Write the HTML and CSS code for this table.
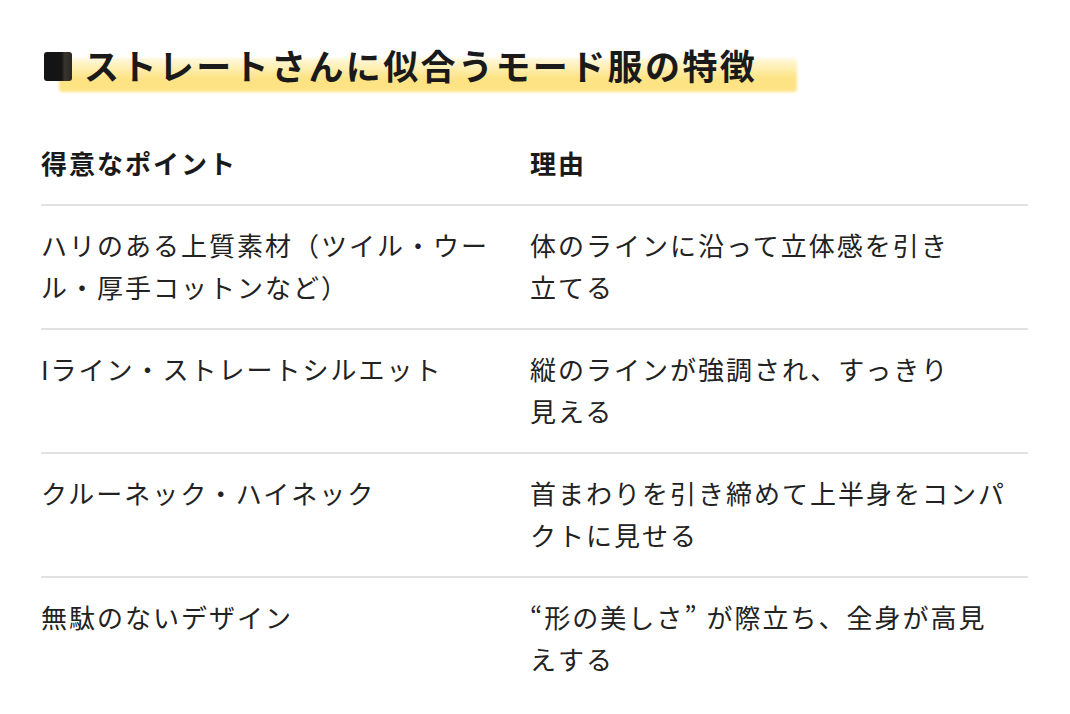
FILE: index.html
```html
<!DOCTYPE html>
<html lang="ja">
<head>
<meta charset="utf-8">
<link rel="stylesheet" href="styles.css">
</head>
<body>
<div class="page">
  <h2 class="title"><span class="mark"></span><span class="title-text">ストレートさんに似合うモード服の特徴</span></h2>
  <div class="table">
    <div class="row head">
      <div class="cell">得意なポイント</div>
      <div class="cell">理由</div>
    </div>
    <div class="row">
      <div class="cell">ハリのある上質素材（ツイル・ウー<br>ル・厚手コットンなど）</div>
      <div class="cell">体のラインに沿って立体感を引き<br>立てる</div>
    </div>
    <div class="row">
      <div class="cell">Iライン・ストレートシルエット</div>
      <div class="cell">縦のラインが強調され、すっきり<br>見える</div>
    </div>
    <div class="row">
      <div class="cell">クルーネック・ハイネック</div>
      <div class="cell">首まわりを引き締めて上半身をコンパ<br>クトに見せる</div>
    </div>
    <div class="row last">
      <div class="cell">無駄のないデザイン</div>
      <div class="cell">“形の美しさ” が際立ち、全身が高見<br>えする</div>
    </div>
  </div>
</div>
</body>
</html>
```
FILE: styles.css
```css
html, body {
  margin: 0;
  padding: 0;
  background: #ffffff;
}
body {
  font-family: "Noto Sans CJK JP", "Noto Sans", sans-serif;
  color: #222222;
}
.page {
  width: 987px;
  padding: 40px 0 0 41px;
}
.title {
  margin: 0;
  display: flex;
  align-items: center;
  font-size: 35px;
  line-height: 49px;
  font-weight: 700;
  letter-spacing: 2.4px;
  color: #1a1a1a;
}
.mark {
  width: 28px;
  height: 29px;
  margin-left: 3px;
  margin-top: 4px;
  border-radius: 3px;
  background: linear-gradient(to right, #141414 0%, #141414 62%, #3a3530 74%, #2a2622 100%);
  flex: none;
  position: relative;
  z-index: 2;
}
.title-text {
  position: relative;
  margin-left: 12px;
  z-index: 1;
}
.title-text::before {
  content: "";
  position: absolute;
  left: -25px;
  right: -40px;
  top: 18px;
  bottom: -3px;
  background: linear-gradient(to bottom, rgba(255, 236, 160, 0.35) 0%, rgba(254, 230, 140, 0.8) 40%, #fde383 60%, #fde383 100%);
  filter: blur(1.5px);
  border-radius: 4px;
  z-index: -1;
}
.table {
  margin-top: 53px;
}
.row {
  display: grid;
  grid-template-columns: 489px 1fr;
  border-bottom: 2px solid #e2e2e2;
  padding: 18px 0 20px;
  font-size: 26px;
  line-height: 42px;
  letter-spacing: 2px;
}
.row.head {
  padding: 0 0 20px;
  font-weight: 700;
  color: #1a1a1a;
}
.row.last {
  border-bottom: none;
}
.cell {
  white-space: nowrap;
}
```
